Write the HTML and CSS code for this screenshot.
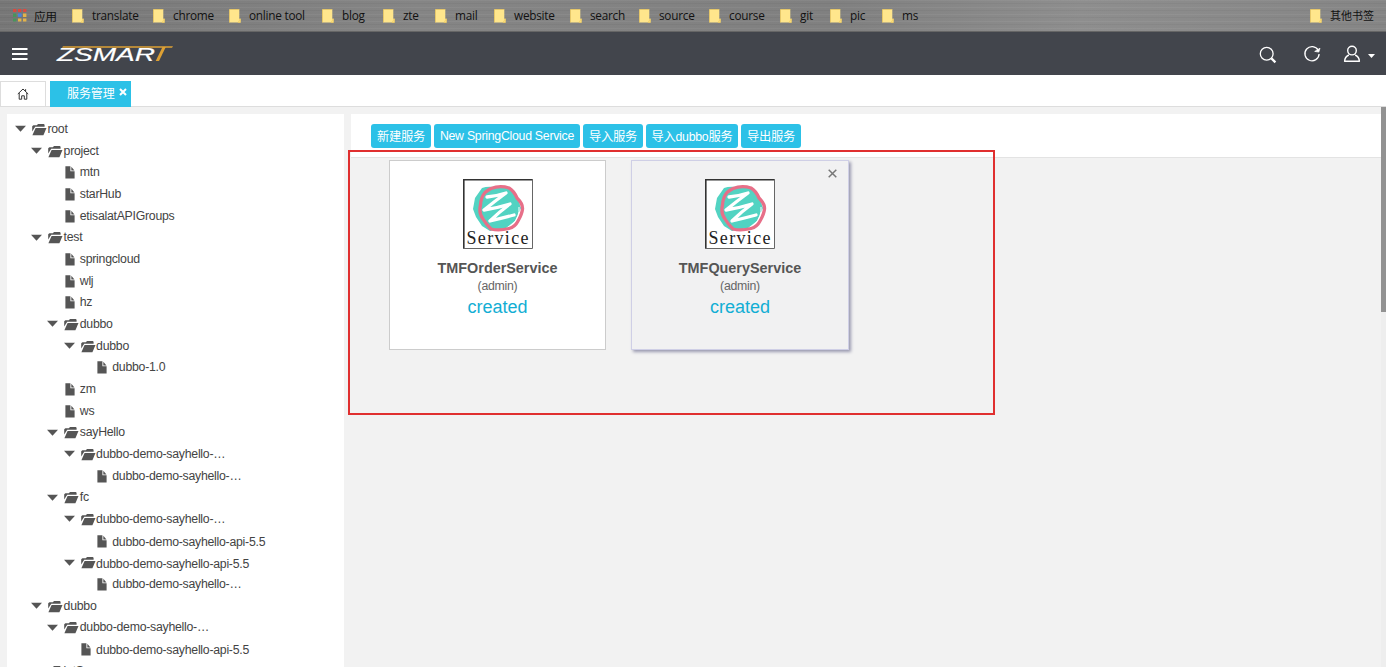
FILE: index.html
```html
<!DOCTYPE html>
<html lang="zh">
<head>
<meta charset="utf-8">
<title>服务管理</title>
<link rel="stylesheet" href="styles.css">
</head>
<body>
<svg class="defs" aria-hidden="true">
  <symbol id="note" viewBox="0 0 12 14"><path d="M.5.5h9.8v9.2h1.2v3.8H.5z" fill="#ffe68c"/><path d="M.5 13.5V.5h9.8M11.3 9.8v3.7H9.2l2.1-3.7" fill="none" stroke="#efcb62" stroke-width=".8"/></symbol>
  <symbol id="arrow" viewBox="0 0 12 7"><path d="M0 .8h11L5.5 6.8z" fill="#555"/></symbol>
  <symbol id="folder" viewBox="0 0 15 12"><path d="M.2 7.4V2.2L1.4 1.2h3.4L6 0h5.8l.8.8v2H3.2z" fill="#555"/><path d="M3.6 3.9h10.9l-3.1 7.4H.4z" fill="#555"/></symbol>
  <symbol id="file" viewBox="0 0 10 13"><path d="M.4.2h5v5h4.2v7.4H.4z" fill="#555"/><path d="M6.3.8l3.2 3.6H6.3z" fill="#555"/></symbol>
  <symbol id="art" viewBox="0 0 70 70">
    <path d="M0 0h70v70H0z" fill="#fff"/>
    <path d="M19 9Q24 7 32 8L45 9 54 17 58 29 52 42 43 49 27 52 19 47 13 38 10 30 12 19z" fill="#52d3c2"/>
    <path d="M28 9.500Q37 6 46 9 51 12 54 19 60 25 59.500 30 59 35 55 42 52 48 46 49.500 36 52 28 50 23 45 20 40 15.500 34 17.500 26 18 18 22 13.500 25 11 28 9.500z" fill="none" stroke="#e76f88" stroke-width="3.300"/>
    <path d="M56 28Q57 37 50 45" fill="none" stroke="#fff" stroke-width="1"/>
    <path d="M24 18Q34 17 43 14 32 22 21 31 34 29 47 25 36 33 27 42 40 39 51 36" fill="none" stroke="#fff" stroke-width="3.300" stroke-linejoin="round" stroke-linecap="round"/>
    <path d="M.8 70V.8H70" fill="none" stroke="#333" stroke-width="1.600"/><path d="M69.500 0v69.500H0" fill="none" stroke="#666" stroke-width="1"/>
  </symbol>
</svg>

<nav class="bookmarks">
  <a class="bm apps"><svg viewBox="0 0 14 14"><path fill="#d64b42" d="M0 0h3.400v3H0zM5 0h3.400v3H5zM10 0h3.400v3H10z"/><path fill="#48945b" d="M0 4.500h3.400v3.400H0zM0 9.400h3.400v3H0z"/><path fill="#4a83dc" d="M5 4.500h3.600v3.400H5z"/><path fill="#e2b34a" d="M10 4.500h3.400v3.400H10zM5 9.400h3.400v3H5zM10 9.400h3.400v3H10z"/></svg><span>应用</span></a>
  <a class="bm"><svg><use href="#note"/></svg><span>translate</span></a>
  <a class="bm"><svg><use href="#note"/></svg><span>chrome</span></a>
  <a class="bm"><svg><use href="#note"/></svg><span>online tool</span></a>
  <a class="bm"><svg><use href="#note"/></svg><span>blog</span></a>
  <a class="bm"><svg><use href="#note"/></svg><span>zte</span></a>
  <a class="bm"><svg><use href="#note"/></svg><span>mail</span></a>
  <a class="bm"><svg><use href="#note"/></svg><span>website</span></a>
  <a class="bm"><svg><use href="#note"/></svg><span>search</span></a>
  <a class="bm"><svg><use href="#note"/></svg><span>source</span></a>
  <a class="bm"><svg><use href="#note"/></svg><span>course</span></a>
  <a class="bm"><svg><use href="#note"/></svg><span>git</span></a>
  <a class="bm"><svg><use href="#note"/></svg><span>pic</span></a>
  <a class="bm"><svg><use href="#note"/></svg><span>ms</span></a>
  <a class="bm other"><svg><use href="#note"/></svg><span>其他书签</span></a>
</nav>

<header class="topbar">
  <svg class="burger" viewBox="0 0 16 12"><path d="M0 1h15.500M0 6h15.500M0 11h15.500" stroke="#fff" stroke-width="2"/></svg>
  <svg class="logo" viewBox="0 0 118 20">
    <text x="2" y="17" textLength="98" lengthAdjust="spacingAndGlyphs" class="logo-text">ZSMAR</text>
    <path d="M8 2.200h110l-1 1.600H7z" fill="#dda034"/>
    <path d="M107.500 3h3.300L104 17h-3.300z" fill="#dda034"/>
  </svg>
  <div class="tools">
    <svg class="t-search" viewBox="0 0 18 18"><circle cx="7.700" cy="7.700" r="6.400" fill="none" stroke="#fff" stroke-width="1.300"/><path d="M12.400 12.400l4 4" stroke="#fff" stroke-width="2.200"/></svg>
    <svg class="t-reload" viewBox="0 0 18 18"><path d="M15.200 5.200A7.100 7.100 0 1 0 16.100 9" fill="none" stroke="#fff" stroke-width="1.300"/><path d="M11.700 6.400L17 3.200l-1.200 3.900z" fill="#fff" stroke="#fff" stroke-width=".7"/></svg>
    <svg class="t-user" viewBox="0 0 18 18"><circle cx="9" cy="5.600" r="4.300" fill="none" stroke="#fff" stroke-width="1.400"/><path d="M5.800 10C3 11.400 1.700 13.300 1.600 16.300h14.800C16.300 13.300 15 11.400 12.200 10" fill="none" stroke="#fff" stroke-width="1.400" stroke-linejoin="round"/></svg>
    <svg class="t-caret" viewBox="0 0 7 4"><path d="M0 0h7L3.500 4z" fill="#fff"/></svg>
  </div>
</header>

<div class="tabs">
  <a class="tab home"><svg viewBox="0 0 12 12"><path d="M.8 6L6 1l5.200 5M2.200 5v6.200h2.500V7.800h2.600v3.400h2.500V5M8.600 1.200v2" fill="none" stroke="#333" stroke-width="1"/></svg></a>
  <a class="tab active"><span>服务管理</span><svg viewBox="0 0 8 8"><path d="M1 1l6 6M7 1L1 7" stroke="#fff" stroke-width="2"/></svg></a>
</div>

<div class="workspace">
  <aside class="tree">
    <div class="row l0"><svg class="a"><use href="#arrow"/></svg><svg class="d"><use href="#folder"/></svg><span>root</span></div>
    <div class="row l1"><svg class="a"><use href="#arrow"/></svg><svg class="d"><use href="#folder"/></svg><span>project</span></div>
    <div class="row l2"><i class="a"></i><svg class="f"><use href="#file"/></svg><span>mtn</span></div>
    <div class="row l2"><i class="a"></i><svg class="f"><use href="#file"/></svg><span>starHub</span></div>
    <div class="row l2"><i class="a"></i><svg class="f"><use href="#file"/></svg><span>etisalatAPIGroups</span></div>
    <div class="row l1"><svg class="a"><use href="#arrow"/></svg><svg class="d"><use href="#folder"/></svg><span>test</span></div>
    <div class="row l2"><i class="a"></i><svg class="f"><use href="#file"/></svg><span>springcloud</span></div>
    <div class="row l2"><i class="a"></i><svg class="f"><use href="#file"/></svg><span>wlj</span></div>
    <div class="row l2"><i class="a"></i><svg class="f"><use href="#file"/></svg><span>hz</span></div>
    <div class="row l2"><svg class="a"><use href="#arrow"/></svg><svg class="d"><use href="#folder"/></svg><span>dubbo</span></div>
    <div class="row l3"><svg class="a"><use href="#arrow"/></svg><svg class="d"><use href="#folder"/></svg><span>dubbo</span></div>
    <div class="row l4"><i class="a"></i><svg class="f"><use href="#file"/></svg><span>dubbo-1.0</span></div>
    <div class="row l2"><i class="a"></i><svg class="f"><use href="#file"/></svg><span>zm</span></div>
    <div class="row l2"><i class="a"></i><svg class="f"><use href="#file"/></svg><span>ws</span></div>
    <div class="row l2"><svg class="a"><use href="#arrow"/></svg><svg class="d"><use href="#folder"/></svg><span>sayHello</span></div>
    <div class="row l3"><svg class="a"><use href="#arrow"/></svg><svg class="d"><use href="#folder"/></svg><span>dubbo-demo-sayhello-…</span></div>
    <div class="row l4"><i class="a"></i><svg class="f"><use href="#file"/></svg><span>dubbo-demo-sayhello-…</span></div>
    <div class="row l2"><svg class="a"><use href="#arrow"/></svg><svg class="d"><use href="#folder"/></svg><span>fc</span></div>
    <div class="row l3"><svg class="a"><use href="#arrow"/></svg><svg class="d"><use href="#folder"/></svg><span>dubbo-demo-sayhello-…</span></div>
    <div class="row l4 full"><i class="a"></i><svg class="f"><use href="#file"/></svg><span>dubbo-demo-sayhello-api-5.5</span></div>
    <div class="row l3 full"><svg class="a"><use href="#arrow"/></svg><svg class="d"><use href="#folder"/></svg><span>dubbo-demo-sayhello-api-5.5</span></div>
    <div class="row l4"><i class="a"></i><svg class="f"><use href="#file"/></svg><span>dubbo-demo-sayhello-…</span></div>
    <div class="row l1"><svg class="a"><use href="#arrow"/></svg><svg class="d"><use href="#folder"/></svg><span>dubbo</span></div>
    <div class="row l2"><svg class="a"><use href="#arrow"/></svg><svg class="d"><use href="#folder"/></svg><span>dubbo-demo-sayhello-…</span></div>
    <div class="row l3 full"><i class="a"></i><svg class="f"><use href="#file"/></svg><span>dubbo-demo-sayhello-api-5.5</span></div>
    <div class="row l1"><i class="a"></i><svg class="d"><use href="#folder"/></svg><span>lotS</span></div>
  </aside>

  <main class="content">
    <div class="actions">
      <button class="btn b1">新建服务</button>
      <button class="btn b2">New SpringCloud Service</button>
      <button class="btn b3">导入服务</button>
      <button class="btn b4">导入dubbo服务</button>
      <button class="btn b5">导出服务</button>
    </div>
    <div class="cards">
      <section class="card">
        <svg class="pic" viewBox="0 0 70 70"><use href="#art"/><text x="3.500" y="65" textLength="62" class="service-word">Service</text></svg>
        <h3>TMFOrderService</h3>
        <p class="owner">(admin)</p>
        <p class="state">created</p>
      </section>
      <section class="card hover">
        <svg class="close" viewBox="0 0 9 9"><path d="M.7.7l7.600 7.600M8.300.7L.7 8.300" stroke="#777" stroke-width="1.500"/></svg>
        <svg class="pic" viewBox="0 0 70 70"><use href="#art"/><text x="3.500" y="65" textLength="62" class="service-word">Service</text></svg>
        <h3>TMFQueryService</h3>
        <p class="owner">(admin)</p>
        <p class="state">created</p>
      </section>
    </div>
  </main>
  <div class="scroll"><div class="thumb"></div></div>
</div>
<div class="marker"></div>
</body>
</html>
```

FILE: styles.css
```css
* { box-sizing: border-box; }
body {
  margin: 0;
  width: 1386px;
  height: 667px;
  overflow: hidden;
  display: flex;
  flex-direction: column;
  background: #fff;
  color: #444;
  font: 12.3px "Liberation Sans", "Noto Sans CJK SC", sans-serif;
  letter-spacing: -.26px;
}
svg { display: block; flex: none; }
.defs { display: none; }

/* Bookmarks bar */
.bookmarks {
  flex: none;
  height: 32px;
  display: flex;
  padding-left: 13px;
  border-bottom: 1px solid #666;
  background:
    repeating-linear-gradient(180deg, rgba(255,255,255,.05) 0 1px, transparent 1px 3px, rgba(0,0,0,.04) 3px 4px, transparent 4px 7px),
    linear-gradient(90deg, #777 0, #858585 30%, #808080 60%, #8e8e8e 78%, #858585 100%);
  font: 11.8px "Open Sans", "Noto Sans CJK SC", sans-serif;
  letter-spacing: -.25px;
  color: #111;
}
.bm { flex: none; display: flex; align-items: center; width: 70px; height: 31px; white-space: nowrap; }
.bm span { padding-bottom: 1px; }
.bm svg { width: 12px; height: 14px; margin-right: 8px; }
.bm.apps { width: 59px; letter-spacing: -.5px; }
.bm.apps svg { width: 14px; margin-right: 7px; }
.bm:nth-child(2) { width: 81px; }
.bm:nth-child(3) { width: 76px; }
.bm:nth-child(4) { width: 93px; }
.bm:nth-child(5) { width: 61px; }
.bm:nth-child(6) { width: 52px; }
.bm:nth-child(7) { width: 59px; }
.bm:nth-child(8) { width: 76px; }
.bm:nth-child(9) { width: 69px; }
.bm:nth-child(11) { width: 71px; }
.bm:nth-child(12) { width: 50px; }
.bm:nth-child(13) { width: 52px; }
.bm.other { width: 76px; margin-left: auto; font-size: 11px; letter-spacing: 0; }

/* Header */
.topbar { flex: none; height: 43px; display: flex; align-items: flex-start; padding-left: 12px; background: #42454c; }
.burger { width: 16px; height: 12px; margin-top: 16px; }
.logo { width: 118px; height: 20px; margin: 12px 0 0 27px; overflow: visible; }
.logo-text { font: italic 18.5px "Liberation Sans", sans-serif; letter-spacing: 0; fill: #fff; stroke: #fff; stroke-width: .2; }
.tools { display: flex; margin-left: auto; padding-right: 11px; }
.t-search { width: 18px; height: 18px; margin-top: 14px; }
.t-reload { width: 18px; height: 18px; margin: 13px 0 0 26px; }
.t-user { width: 18px; height: 18px; margin: 13px 0 0 22px; }
.t-caret { width: 7px; height: 4px; margin: 22px 0 0 7px; }

/* Tabs */
.tabs { flex: none; height: 32px; display: flex; align-items: flex-start; padding-top: 6px; border-bottom: 1px solid #ddd; }
.tab { display: flex; height: 26px; }
.home { width: 46px; height: 26px; align-items: center; justify-content: center; border: 1px solid #ddd; }
.home svg { width: 12px; height: 12px; }
.active { width: 81px; margin-left: 4px; padding-left: 17px; background: #2cc1e7; color: #fff; line-height: 26px; }
.active span { font-size: 12px; letter-spacing: -.1px; white-space: nowrap; }
.active svg { width: 8px; height: 8px; margin: 7px 0 0 4px; }

/* Workspace */
.workspace { flex: 1; min-height: 0; display: flex; background: #f2f2f2; padding-left: 7px; }
.tree { width: 337px; margin-top: 7px; padding: 4px 0 0 8px; overflow: hidden; background: #fff; }
.row { display: flex; align-items: center; height: 21.68px; white-space: nowrap; color: #444; }
.row span { line-height: 20px; }
.row.full span { padding-top: 3px; }
.a { flex: none; width: 12px; height: 7px; margin-right: 5px; }
.d { width: 15px; height: 12px; margin: 2px .4px 0 0; }
.f { width: 10px; height: 13px; margin: 1px 5px 0 .4px; }
.l1 { padding-left: 16.2px; }
.l2 { padding-left: 32.4px; }
.l3 { padding-left: 48.7px; }
.l4 { padding-left: 64.9px; }

.content { flex: 1; margin: 7px 0 0 7px; }
.actions { height: 44px; display: flex; gap: 3px; padding: 10px 0 0 20px; background: #fff; border-bottom: 1px solid #e3e3e3; }
.btn {
  height: 24px;
  padding: 0 0 1px;
  border: 0;
  border-radius: 3px;
  background: #2cc1e7;
  color: #fff;
  font: inherit;
  letter-spacing: inherit;
  white-space: nowrap;
}
.b1, .b3, .b5 { width: 60px; }
.b2 { width: 146px; }
.b4 { width: 92px; }
.cards { display: flex; gap: 25px; padding: 2px 0 0 38px; }
.card {
  position: relative;
  width: 217px;
  height: 190px;
  padding-top: 18px;
  display: flex;
  flex-direction: column;
  align-items: center;
  border: 1px solid #ccc;
  background: #fff;
}
.card.hover { width: 218px; background: #f1f1f2; border-color: #cfcfe6; box-shadow: 2px 2px 3px #9a9ab0; }
.pic { width: 70px; height: 70px; }
.service-word { font: 18px "Liberation Serif", serif; letter-spacing: 0; fill: #222; }
.card h3 { margin: 10px 0 0; font-size: 14.4px; line-height: 18px; letter-spacing: 0; color: #555; }
.card p { margin: 0; }
.owner { margin-top: 1px; line-height: 18px; color: #666; }
.card .state { font-size: 18px; line-height: 24px; letter-spacing: 0; color: #12aed4; }
.close { position: absolute; right: 11px; top: 8px; width: 9px; height: 9px; }

.scroll { width: 5px; background: #eee; }
.thumb { height: 205px; background: #929292; }

/* Highlighted region */
.marker { position: absolute; left: 348px; top: 150px; width: 647px; height: 265px; border: 2px solid #e02f2f; }
```
